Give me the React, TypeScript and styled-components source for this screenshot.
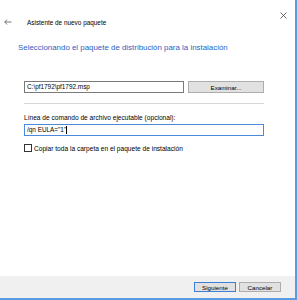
import React from 'react';
import styled, { createGlobalStyle } from 'styled-components';

const Global = createGlobalStyle`
  html, body { margin: 0; padding: 0; background: #ffffff; }
  body { font-family: "Liberation Sans", Arial, sans-serif; }
`;

export default function App() {
  return (
    <>
      <Global />
      <Window>
        <Body>
          <TopBar>
            <Back>
              <svg width="8" height="6" viewBox="0 0 8 6">
                <path d="M3 0.5 L0.8 3 L3 5.5 M0.8 3 H7.5" fill="none" stroke="#555" strokeWidth="0.8" />
              </svg>
            </Back>
            <Title>Asistente de nuevo paquete</Title>
            <Close>
              <svg width="7" height="7" viewBox="0 0 7 7">
                <path d="M0.5 0.5 L6.5 6.5 M6.5 0.5 L0.5 6.5" stroke="#444" strokeWidth="0.8" />
              </svg>
            </Close>
          </TopBar>
          <Heading>Seleccionando el paquete de distribución para la instalación</Heading>
          <Form>
            <Row>
              <Field width={160}>C:\pf1792\pf1792.msp</Field>
              <Button>Examinar...</Button>
            </Row>
            <Separator />
            <Label>Línea de comando de archivo ejecutable (opcional):</Label>
            <Field width={240} focused>
              /qn EULA="1"<Caret />
            </Field>
            <CheckRow>
              <Box />
              <span>Copiar toda la carpeta en el paquete de instalación</span>
            </CheckRow>
          </Form>
        </Body>
        <Footer>
          <Button primary small>Siguiente</Button>
          <Button small>Cancelar</Button>
        </Footer>
      </Window>
    </>
  );
}

const Window = styled.div`
  width: 295px;
  height: 298px;
  display: flex;
  flex-direction: column;
  background: #ffffff;
  border-right: 2px solid #5b9be0;
  border-bottom: 2px solid #5b9be0;
`;

const Body = styled.div`
  flex: 1;
  display: flex;
  flex-direction: column;
`;

const TopBar = styled.div`
  position: relative;
  height: 30px;
  display: flex;
  align-items: flex-end;
  padding-left: 4px;
  gap: 15px;
`;

const Back = styled.div`
  display: flex;
  align-items: center;
  height: 8px;
  margin-bottom: 4px;
`;

const Title = styled.div`
  font-size: 6.4px;
  color: #000;
  margin-bottom: 3px;
  line-height: 8px;
`;

const Close = styled.div`
  position: absolute;
  right: 8px;
  top: 12px;
  display: flex;
`;

const Heading = styled.div`
  margin: 12px 0 0 18px;
  font-size: 7.9px;
  color: #2a5fc4;
  line-height: 11px;
`;

const Form = styled.div`
  display: flex;
  flex-direction: column;
  align-items: flex-start;
  padding: 28px 0 0 24px;
`;

const Row = styled.div`
  display: flex;
  align-items: center;
  gap: 4px;
`;

const Field = styled.div<{ width: number; focused?: boolean }>`
  box-sizing: border-box;
  width: ${(p) => p.width}px;
  height: 12px;
  border: 1px solid ${(p) => (p.focused ? '#4a8ad8' : '#7a7a7a')};
  font-size: 6.4px;
  line-height: 10px;
  padding-left: 2px;
  color: #000;
  display: flex;
  align-items: center;
`;

const Caret = styled.span`
  display: inline-block;
  width: 0.6px;
  height: 8px;
  background: #000;
`;

const Button = styled.div<{ primary?: boolean; small?: boolean }>`
  box-sizing: border-box;
  width: ${(p) => (p.small ? '42px' : '76px')};
  height: ${(p) => (p.small ? '10px' : '12px')};
  background: #e1e1e1;
  border: 1px solid ${(p) => (p.primary ? '#3c7fd5' : '#adadad')};
  font-size: 6.2px;
  color: #000;
  display: flex;
  align-items: center;
  justify-content: center;
`;

const Separator = styled.div`
  width: 240px;
  height: 1px;
  background: #d7d7d7;
  margin: 10px 0 10px;
`;

const Label = styled.div`
  font-size: 6.6px;
  color: #000;
  line-height: 8px;
  margin-bottom: 2px;
`;

const CheckRow = styled.div`
  display: flex;
  align-items: center;
  gap: 2px;
  margin-top: 8px;
  font-size: 6.6px;
  color: #000;
`;

const Box = styled.div`
  box-sizing: border-box;
  width: 8px;
  height: 8px;
  border: 1px solid #333;
  background: #fff;
`;

const Footer = styled.div`
  height: 22px;
  background: #f0f0f0;
  display: flex;
  align-items: center;
  justify-content: flex-end;
  gap: 3px;
  padding-right: 14px;
`;
